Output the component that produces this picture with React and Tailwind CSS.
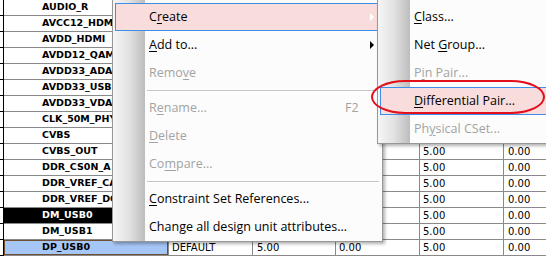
import React from 'react'

const nets = [
  'AUDIO_R', 'AVCC12_HDMI', 'AVDD_HDMI', 'AVDD12_QAM', 'AVDD33_ADAC', 'AVDD33_USB',
  'AVDD33_VDAC', 'CLK_50M_PHY', 'CVBS', 'CVBS_OUT', 'DDR_CS0N_A', 'DDR_VREF_CA',
  'DDR_VREF_DQ', 'DM_USB0', 'DM_USB1', 'DP_USB0',
]

const menuFont = { fontFamily: '"Open Sans", "Noto Sans", sans-serif' }

function Mn({ text, at }) {
  if (at < 0) return <>{text}</>
  return (
    <>
      {text.slice(0, at)}
      <span className="underline underline-offset-2 decoration-1">{text[at]}</span>
      {text.slice(at + 1)}
    </>
  )
}

function Item({ label, at = -1, disabled, hot, arrow, shortcut }) {
  return (
    <div className={`relative h-7 flex items-center pl-[34px] pr-2 text-[12.5px] ${hot ? 'bg-[#f9dcdc] shadow-[inset_0_0_0_1px_#3d8ee8]' : ''} ${disabled ? 'text-[#a3a3a3]' : 'text-black'}`}>
      <span><Mn text={label} at={at} /></span>
      {shortcut && <span className="absolute left-[230px]">{shortcut}</span>}
      {arrow && (
        <span className={`absolute right-[5px] top-1/2 -translate-y-1/2 w-0 h-0 border-y-[4px] border-y-transparent border-l-[4px] ${hot ? 'border-l-white' : 'border-l-black'}`} />
      )}
    </div>
  )
}

function Sep() {
  return (
    <div className="h-[7px] flex flex-col justify-center pl-[32px]">
      <div className="h-px bg-[#c5c5c5]" />
      <div className="h-px bg-white" />
    </div>
  )
}

function Gutter() {
  return <div className="absolute left-0 top-0 bottom-0 w-[32px] bg-gradient-to-r from-[#f6f6f6] via-[#e2e2e2] to-[#bdbdbd]" />
}

export default function App() {
  return (
    <div className="relative w-[546px] h-[256px] overflow-hidden bg-white">
      {/* grid underneath */}
      <div style={{ fontFamily: '"DejaVu Sans", sans-serif' }}>
        {nets.map((n, i) => {
          const sel = i === 13
          const cur = i === 15
          return (
            <div key={n} className="grid grid-cols-[4px_165px_84px_83px_84px_84px_1fr] h-4 text-[10px] text-black">
              <div className="border-r border-b border-black" />
              <div className={`border-r border-b border-[#8a8a8a] flex items-center pl-[38px] font-bold text-[9.5px] whitespace-nowrap overflow-hidden ${sel ? 'bg-black text-white' : ''} ${cur ? 'bg-[#a6c6f6] shadow-[inset_0_0_0_1px_#6e5030]' : ''}`}>{n}</div>
              <div className="border-r border-b border-[#8a8a8a] flex items-center pl-[3px]">DEFAULT</div>
              <div className="border-r border-b border-[#8a8a8a] flex items-center pl-[4px]">5.00</div>
              <div className="border-r border-b border-[#8a8a8a] flex items-center pl-[3px]">0.00</div>
              <div className="border-r border-b border-[#8a8a8a] flex items-center pl-[3px]">5.00</div>
              <div className="border-b border-[#8a8a8a] flex items-center pl-[4px]">0.00</div>
            </div>
          )
        })}
      </div>

      {/* context menu */}
      <div className="absolute left-[112px] top-[-1px] w-[271px] border border-[#979797] bg-[#fcfcfc] pt-[3px] pl-[2px] pr-[3px] shadow-[2px_2px_3px_rgba(0,0,0,0.3)]" style={menuFont}>
        <Gutter />
        <div className="relative">
          <Item label="Create" at={1} hot arrow />
          <Item label="Add to..." at={0} arrow />
          <Item label="Remove" at={4} disabled />
          <Sep />
          <Item label="Rename..." at={1} disabled shortcut="F2" />
          <Item label="Delete" at={0} disabled />
          <Item label="Compare..." at={2} disabled />
          <Sep />
          <Item label="Constraint Set References..." at={0} />
          <Item label="Change all design unit attributes..." />
        </div>
      </div>

      {/* submenu */}
      <div className="absolute left-[377px] top-[-1px] w-[200px] border border-[#979797] bg-[#fcfcfc] pt-[3px] pl-[2px] shadow-[2px_2px_3px_rgba(0,0,0,0.3)]" style={menuFont}>
        <Gutter />
        <div className="relative">
          <Item label="Class..." at={0} />
          <Item label="Net Group..." at={4} />
          <Item label="Pin Pair..." at={1} disabled />
          <Item label="Differential Pair..." at={0} hot />
          <Item label="Physical CSet..." at={2} disabled />
        </div>
      </div>

      {/* red annotation */}
      <div className="absolute left-[371px] top-[80px] w-[174px] h-[34px] rounded-[34px/17px] border-2 border-[#e3101c]" />
    </div>
  )
}
